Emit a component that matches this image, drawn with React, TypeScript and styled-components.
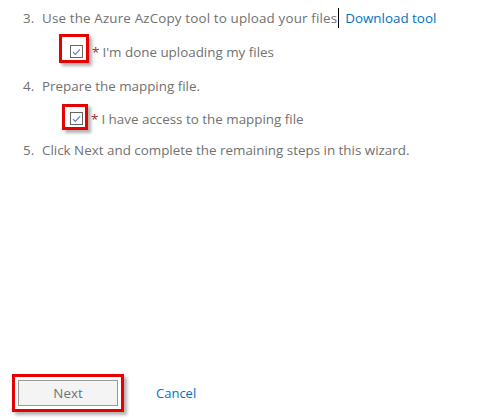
import React from 'react'
import styled, { createGlobalStyle } from 'styled-components'

const Global = createGlobalStyle`
  body {
    margin: 0;
    background: #fff;
    font-family: 'Open Sans', 'Noto Sans', sans-serif;
  }
`

const Page = styled.div`
  width: 477px;
  height: 419px;
  display: flex;
  flex-direction: column;
  padding: 6px 0 0 23px;
  box-sizing: border-box;
  color: #717171;
  font-size: 13.4px;
`

const Steps = styled.ol`
  list-style: none;
  margin: 0;
  padding: 0;
  display: flex;
  flex-direction: column;
`

const Step = styled.li<{ spacing?: number }>`
  display: flex;
  align-items: center;
  height: 24px;
  letter-spacing: ${p => p.spacing ?? 0}px;
`

const Num = styled.span`
  width: 19px;
  letter-spacing: 0;
`

const Caret = styled.span`
  display: inline-block;
  width: 1px;
  height: 20px;
  background: #000;
  margin: 0 6px 0 1px;
`

const Link = styled.a`
  color: #0072c6;
  text-decoration: none;
  letter-spacing: 0;
  cursor: pointer;
`

const CheckRow = styled.div<{ indent: number; tall: boolean }>`
  display: flex;
  align-items: flex-end;
  padding-left: ${p => p.indent}px;
  margin: ${p => (p.tall ? '4px 0 11px' : '6px 0 8px')};
`

const Highlight = styled.span`
  display: inline-flex;
  border: 3px solid #e60000;
  box-shadow: 3px 3px 3px rgba(0, 0, 0, 0.3);
`

const CheckHighlight = styled(Highlight)<{ tall: boolean }>`
  padding: ${p => (p.tall ? '8px 3px 2px 8px' : '5px 2px 2px 5px')};
`

const Box = styled.span`
  width: 11px;
  height: 11px;
  border: 1px solid #666;
  display: flex;
  align-items: center;
  justify-content: center;
  background: #fff;
`

const Label = styled.span`
  margin: 0 0 2px 3px;
`

const Star = styled.span`
  color: #a4262c;
  margin-right: 3px;
`

const Footer = styled.div`
  margin-top: auto;
  display: flex;
  align-items: center;
  padding: 0 0 7px 0;
  margin-left: -11px;
`

const ButtonHighlight = styled(Highlight)`
  padding: 3px;
`

const Button = styled.button`
  width: 100px;
  height: 26px;
  border: 1px solid #999;
  background: #f4f4f4;
  color: #717171;
  font: inherit;
  font-size: 13.4px;
  padding: 0;
`

const CancelLink = styled(Link)`
  margin-left: 32px;
  font-size: 13px;
`

const Check = () => (
  <Box>
    <svg width="9" height="8" viewBox="0 0 9 8">
      <path d="M1 4.2 L3.3 6.4 L8 1.4" fill="none" stroke="#4a7fc1" strokeWidth="1.1" />
    </svg>
  </Box>
)

const CheckItem = ({ indent, label, tall }: { indent: number; label: string; tall: boolean }) => (
  <CheckRow indent={indent} tall={tall}>
    <CheckHighlight tall={tall}>
      <Check />
    </CheckHighlight>
    <Label>
      <Star>*</Star>
      {label}
    </Label>
  </CheckRow>
)

export default function App() {
  return (
    <>
      <Global />
      <Page>
        <Steps>
          <Step spacing={0.15}>
            <Num>3.</Num>
            Use the Azure AzCopy tool to upload your files
            <Caret />
            <Link>Download tool</Link>
          </Step>
          <CheckItem indent={36} tall label="I'm done uploading my files" />
          <Step>
            <Num>4.</Num>
            Prepare the mapping file.
          </Step>
          <CheckItem indent={39} tall={false} label="I have access to the mapping file" />
          <Step>
            <Num>5.</Num>
            Click Next and complete the remaining steps in this wizard.
          </Step>
        </Steps>
        <Footer>
          <ButtonHighlight>
            <Button>Next</Button>
          </ButtonHighlight>
          <CancelLink>Cancel</CancelLink>
        </Footer>
      </Page>
    </>
  )
}
